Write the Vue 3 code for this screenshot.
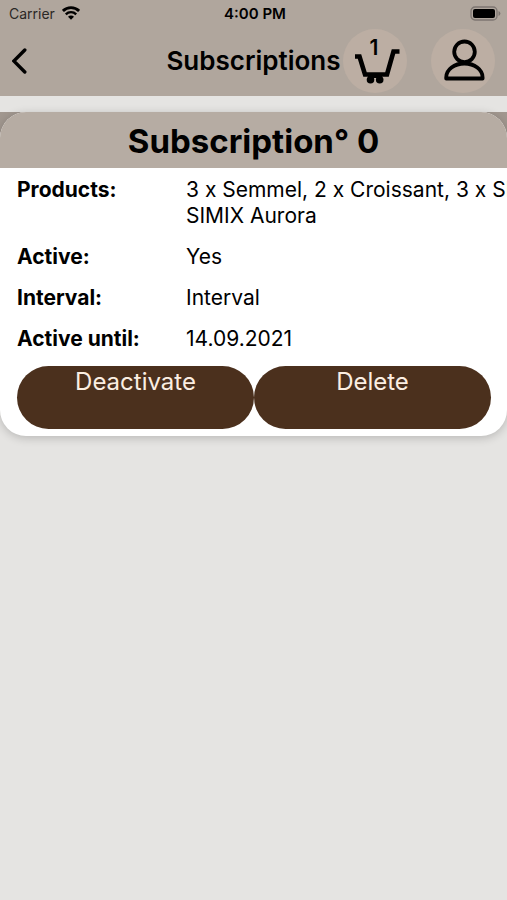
<script setup>
const cartCount = 1
const subscription = {
  number: 0,
  details: [
    { label: 'Products:', lines: ['3 x Semmel, 2 x Croissant, 3 x SIMIX', 'SIMIX Aurora'] },
    { label: 'Active:', lines: ['Yes'] },
    { label: 'Interval:', lines: ['Interval'] },
    { label: 'Active until:', lines: ['14.09.2021'] },
  ],
}
</script>

<template>
  <div class="screen">
    <header class="top">
      <div class="status">
        <div class="carrier">
          <span>Carrier</span>
          <svg class="wifi" width="18" height="14" viewBox="0 0 18 14" aria-hidden="true">
            <path d="M0.9 5A11.5 11.5 0 0 1 17.1 5" fill="none" stroke="#000" stroke-width="2.9" />
            <path d="M3.8 8.3A7.4 7.4 0 0 1 14.2 8.3" fill="none" stroke="#000" stroke-width="2.4" />
            <path d="M9 13.8L6 10.8A4.2 4.2 0 0 1 12 10.8Z" fill="#000" />
          </svg>
        </div>
        <span class="clock">4:00 PM</span>
        <svg class="battery" width="31" height="15" viewBox="0 0 31 15" aria-hidden="true">
          <rect x="1" y="1" width="26" height="13" rx="4" fill="none" stroke="#7d7671" stroke-width="1.3" />
          <rect x="3" y="3" width="22" height="9" rx="2" fill="#000" />
          <path d="M28.5 5A2.6 2.6 0 0 1 28.5 10Z" fill="#7d7671" />
        </svg>
      </div>
      <nav class="bar">
        <button class="back" type="button" aria-label="Back">
          <svg width="16" height="26" viewBox="0 0 16 26" aria-hidden="true">
            <path d="M12.8 2L1.8 13L12.8 24" fill="none" stroke="#000" stroke-width="3.4" stroke-linecap="round" />
          </svg>
        </button>
        <h1 class="title">Subscriptions</h1>
        <div class="actions">
          <button class="round" type="button" aria-label="Cart">
            <svg width="64" height="64" viewBox="0 0 64 64" aria-hidden="true">
              <path d="M12 27.5H16.5L22 45.5H44L50.5 22.5H56.5" fill="none" stroke="#000" stroke-width="4.6" />
              <circle cx="27.5" cy="50.8" r="3.8" />
              <circle cx="36.7" cy="50.8" r="3.8" />
              <rect x="25" y="45" width="14" height="4" />
            </svg>
            <span class="count">{{ cartCount }}</span>
          </button>
          <button class="round" type="button" aria-label="Profile">
            <svg width="64" height="64" viewBox="0 0 64 64" aria-hidden="true">
              <g fill="none" stroke="#000" stroke-width="3.8" stroke-linejoin="round">
                <circle cx="33.5" cy="22.8" r="10.3" />
                <path d="M15.2 49.5V48.5A18.2 14 0 0 1 51.6 48.5V49.5Z" />
              </g>
            </svg>
          </button>
        </div>
      </nav>
    </header>

    <main class="content">
      <div class="backdrop">
        <article class="card">
          <h2 class="card-title">Subscription° {{ subscription.number }}</h2>
          <div class="body">
            <dl class="details">
              <template v-for="item in subscription.details" :key="item.label">
                <dt>{{ item.label }}</dt>
                <dd>
                  <div v-for="line in item.lines" :key="line">{{ line }}</div>
                </dd>
              </template>
            </dl>
            <div class="buttons">
              <button class="pill" type="button">Deactivate</button>
              <button class="pill" type="button">Delete</button>
            </div>
          </div>
        </article>
      </div>
    </main>
  </div>
</template>

<style>
body {
  margin: 0;
  background: #e5e4e2;
}
</style>

<style scoped>
.screen {
  min-height: 100vh;
  overflow: hidden;
  background: #e5e4e2;
  color: #000;
  font-family: Inter, "Liberation Sans", sans-serif;
}
button {
  margin: 0;
  padding: 0;
  border: 0;
  font-family: inherit;
  color: inherit;
  cursor: pointer;
}
svg {
  display: block;
}
.top {
  background: #b0a69d;
}
.status {
  display: grid;
  grid-template-columns: 1fr auto 1fr;
  align-items: center;
  height: 26px;
  padding: 0 6px 0 9px;
  font-size: 14px;
}
.carrier {
  display: flex;
  align-items: center;
  gap: 7px;
  color: #2b2826;
}
.clock {
  font-size: 15px;
  font-weight: 600;
}
.battery {
  justify-self: end;
}
.bar {
  display: grid;
  grid-template-columns: 1fr auto 1fr;
  align-items: center;
  padding: 3px 12px;
}
.back {
  justify-self: start;
  background: none;
}
.title {
  margin: 0;
  font-size: 26px;
  line-height: 32px;
  font-weight: 600;
  white-space: nowrap;
}
.actions {
  display: flex;
  justify-content: flex-end;
  gap: 24px;
}
.round {
  position: relative;
  width: 64px;
  height: 64px;
  border-radius: 50%;
  background: #bcaea3;
}
.count {
  position: absolute;
  top: 6px;
  left: 0;
  width: 62px;
  font-size: 21px;
  line-height: 26px;
  font-weight: 600;
  text-align: center;
}
.content {
  padding-top: 16px;
}
.backdrop {
  background: linear-gradient(#a1978f 0, #a1978f 56px, transparent 56px);
}
.card {
  overflow: hidden;
  border-radius: 26px;
  background: #fff;
  box-shadow: 0 2px 10px rgba(0, 0, 0, 0.2);
}
.card-title {
  margin: 0;
  padding-top: 2px;
  background: #b6aca3;
  font-size: 33px;
  line-height: 54px;
  font-weight: 700;
  text-align: center;
  white-space: nowrap;
}
.body {
  padding: 9px 16px 7px 17px;
}
.details {
  display: grid;
  grid-template-columns: 169px minmax(0, 1fr);
  row-gap: 15px;
  margin: 0 0 14px;
  font-size: 21px;
  line-height: 26px;
}
dt {
  font-weight: 700;
}
dd {
  margin: 0;
  white-space: nowrap;
}
.buttons {
  display: flex;
}
.pill {
  flex: 1;
  display: flex;
  justify-content: center;
  align-items: flex-start;
  height: 63px;
  border-radius: 32px;
  background: #4b301d;
  color: #fbeee2;
  font-size: 24px;
  line-height: 32px;
}
</style>
